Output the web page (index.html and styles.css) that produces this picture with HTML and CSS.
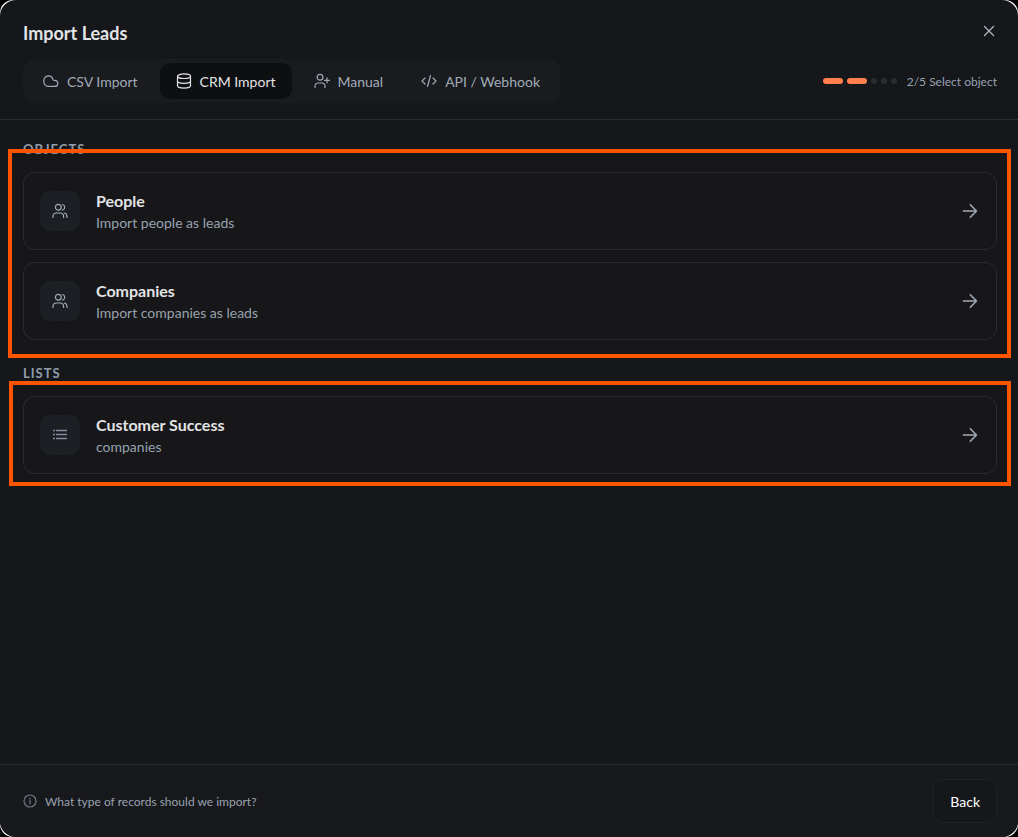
FILE: index.html
```html
<!DOCTYPE html>
<html lang="en">
<head>
    <meta charset="UTF-8">
    <meta name="viewport" content="width=device-width, initial-scale=1">
    <title>Import Leads</title>
    <link rel="stylesheet" href="styles.css">
</head>
<body>
<!-- shared icons -->
<svg class="sprite" aria-hidden="true">
    <symbol id="i-users" viewBox="0 0 16 16">
        <circle cx="6.3" cy="4.3" r="2.9"/>
        <path d="M1 14.5v-1.3a3.2 3.2 0 0 1 3.2-3.2h4.2a3.2 3.2 0 0 1 3.2 3.2v1.3M10.6 1.5a2.9 2.9 0 0 1 0 5.6M12.6 10.2a3.2 3.2 0 0 1 2.4 3v1.3"/>
    </symbol>
    <symbol id="i-arrow" viewBox="0 0 16 16">
        <path d="M1.5 8h13M8.3 1.8 14.5 8l-6.2 6.2"/>
    </symbol>
</svg>
<div class="frame">
    <div class="dialog" role="dialog" aria-labelledby="title">
        <header class="header">
            <div class="row">
                <h1 id="title">Import Leads</h1>
                <button class="close" type="button" aria-label="Close">
                    <svg viewBox="0 0 12 12"><path d="M1.5 1.5l9 9M10.5 1.5l-9 9"/></svg>
                </button>
            </div>
            <div class="row">
                <nav class="tabs">
                    <button class="tab" type="button">
                        <svg viewBox="0 0 16 16"><path d="M5.4 2.9a4.5 4.5 0 0 1 4.5 3.5c.2.7.5 1 1.2 1h.7a3 3 0 0 1 0 6H5.2A4.6 4.6 0 0 1 .8 8.6A5 5 0 0 1 5.4 2.9z"/></svg>
                        CSV Import
                    </button>
                    <button class="tab on" type="button">
                        <svg viewBox="0 0 16 16"><ellipse cx="8" cy="3.2" rx="6.5" ry="2.3"/><path d="M1.5 3.2v9.6c0 1.3 2.9 2.3 6.5 2.3s6.5-1 6.5-2.3V3.2M1.5 8c0 1.3 2.9 2.3 6.5 2.3s6.5-1 6.5-2.3"/></svg>
                        CRM Import
                    </button>
                    <button class="tab" type="button">
                        <svg viewBox="0 0 16 16"><circle cx="6" cy="4.3" r="2.9"/><path d="M1 14.5v-1.3A3.2 3.2 0 0 1 4.2 10h3.6a3.2 3.2 0 0 1 3.2 3.2v1.3M13 4.8v5M10.5 7.3h5"/></svg>
                        Manual
                    </button>
                    <button class="tab" type="button">
                        <svg viewBox="0 0 16 16"><path d="M4 5 1 8l3 3M12 5l3 3-3 3M9.5 2.5l-3 11"/></svg>
                        API / Webhook
                    </button>
                </nav>
                <div class="steps">
                    <i class="done"></i><i class="done"></i><i></i><i></i><i></i>
                    <span>2/5 Select object</span>
                </div>
            </div>
        </header>
        <main class="content">
            <section>
                <h2>OBJECTS</h2>
                <div class="cards marked">
                    <button class="card" type="button">
                        <span class="icon"><svg><use href="#i-users"/></svg></span>
                        <span class="text"><b>People</b><small>Import people as leads</small></span>
                        <svg class="arrow"><use href="#i-arrow"/></svg>
                    </button>
                    <button class="card" type="button">
                        <span class="icon"><svg><use href="#i-users"/></svg></span>
                        <span class="text"><b>Companies</b><small>Import companies as leads</small></span>
                        <svg class="arrow"><use href="#i-arrow"/></svg>
                    </button>
                </div>
            </section>
            <section>
                <h2>LISTS</h2>
                <div class="cards marked short">
                    <button class="card" type="button">
                        <span class="icon"><svg class="list" viewBox="0 0 16 16"><path d="M1 3.5h2M1 7.500h2M1 11.500h2M4 3.500H15M4 7.500H15M4 11.500H15"/></svg></span>
                        <span class="text"><b>Customer Success</b><small>companies</small></span>
                        <svg class="arrow"><use href="#i-arrow"/></svg>
                    </button>
                </div>
            </section>
        </main>
        <footer class="footer">
            <p>
                <svg viewBox="0 0 14 14"><circle cx="7" cy="7" r="6"/><path d="M7 6.5v3.5M7 4v1"/></svg>
                What type of records should we import?
            </p>
            <button class="back" type="button">Back</button>
        </footer>
    </div>
</div>
</body>
</html>
```

FILE: styles.css
```css
*{
    box-sizing: border-box;
    margin: 0;
    padding: 0;
}
body{
    background: #000;
    color: #e3e4e6;
    font-family: Lato, "Open Sans", sans-serif;
    font-size: 14px;
}
button{
    font: inherit;
    color: inherit;
    background: none;
    border: none;
    cursor: pointer;
}
svg{
    width: 16px;
    height: 16px;
    flex: none;
    fill: none;
    stroke: currentColor;
    stroke-width: 1.2;
    stroke-linecap: round;
    stroke-linejoin: round;
}
.sprite{
    position: absolute;
    width: 0;
    height: 0;
}
.frame{
    background: #fff;
    border-radius: 13px;
}
.dialog{
    min-height: 100vh;
    display: flex;
    flex-direction: column;
    background: #15171b;
    border-radius: 16px;
    overflow: hidden;
}
.row{
    display: flex;
    align-items: center;
    justify-content: space-between;
}

/* header */
.header{
    display: grid;
    gap: 12px;
    padding: 19px 21px 16px 23px;
    border-bottom: 1px solid #2b2c30;
}
h1{
    font-size: 18px;
    line-height: 28px;
    font-weight: 700;
}
.close{
    align-self: flex-start;
    width: 16px;
    height: 24px;
    color: #b4b9c1;
}
.close svg{
    width: 12px;
    height: 12px;
}
.tabs{
    display: flex;
    gap: 6px;
    padding: 4px;
    background: #191b1f;
    border-radius: 12px;
}
.tab{
    display: flex;
    align-items: center;
    gap: 8px;
    height: 36px;
    padding: 0 16px;
    border-radius: 10px;
    color: #a1abb8;
}
.tab.on{
    background: #0e0f11;
    color: #e3e4e6;
}
.steps{
    display: flex;
    align-items: center;
    gap: 4px;
    color: #98a2af;
    font-size: 12px;
}
.steps i{
    width: 6px;
    height: 6px;
    border-radius: 3px;
    background: #2b2c30;
}
.steps i.done{
    width: 20px;
    background: #ff7f4d;
}
.steps span{
    margin-left: 6px;
}

/* record types */
.content{
    flex: 1;
    display: flex;
    flex-direction: column;
    gap: 25px;
    padding: 21px 21px 21px 23px;
}
h2{
    margin-bottom: 15px;
    color: #929dab;
    font-size: 13px;
    line-height: 16px;
    font-weight: 700;
    letter-spacing: 1px;
}
.cards{
    position: relative;
    display: grid;
    gap: 12px;
}
.marked::after{
    content: "";
    position: absolute;
    inset: -23px -14px -18px -15px;
    background: rgba(40, 30, 20, .15);
    border: 4px solid #ff5500;
    pointer-events: none;
}
.marked.short::after{
    inset: -15px -14px -12px;
}
.card{
    position: relative;
    z-index: 1;
    display: flex;
    align-items: center;
    gap: 16px;
    padding: 16px;
    border: 1px solid #2b2c2f;
    border-radius: 12px;
    text-align: left;
}
.icon{
    display: flex;
    align-items: center;
    justify-content: center;
    width: 40px;
    height: 40px;
    border-radius: 10px;
    background: #1c1f23;
    color: #a1abb8;
}
.list{
    color: #858b98;
    stroke-width: 1.4;
    stroke-linecap: butt;
}
.text{
    flex: 1;
    display: grid;
}
.text b{
    font-size: 16px;
    line-height: 24px;
}
.text small{
    color: #98a2af;
    font-size: 14px;
    line-height: 20px;
}
.arrow{
    margin-right: 2px;
    color: #a1abb8;
    stroke-width: 1.6;
}

/* footer */
.footer{
    display: flex;
    align-items: center;
    justify-content: space-between;
    padding: 14px 21px 14px 23px;
    background: #18191d;
    border-top: 1px solid #2b2c30;
}
.footer p{
    display: flex;
    align-items: center;
    gap: 8px;
    color: #98a2af;
    font-size: 12px;
}
.footer p svg{
    width: 14px;
    height: 14px;
    color: #717780;
}
.back{
    height: 44px;
    padding: 0 16px;
    background: #15171b;
    border: 1px solid #202226;
    border-radius: 10px;
    color: #fff;
}
```
